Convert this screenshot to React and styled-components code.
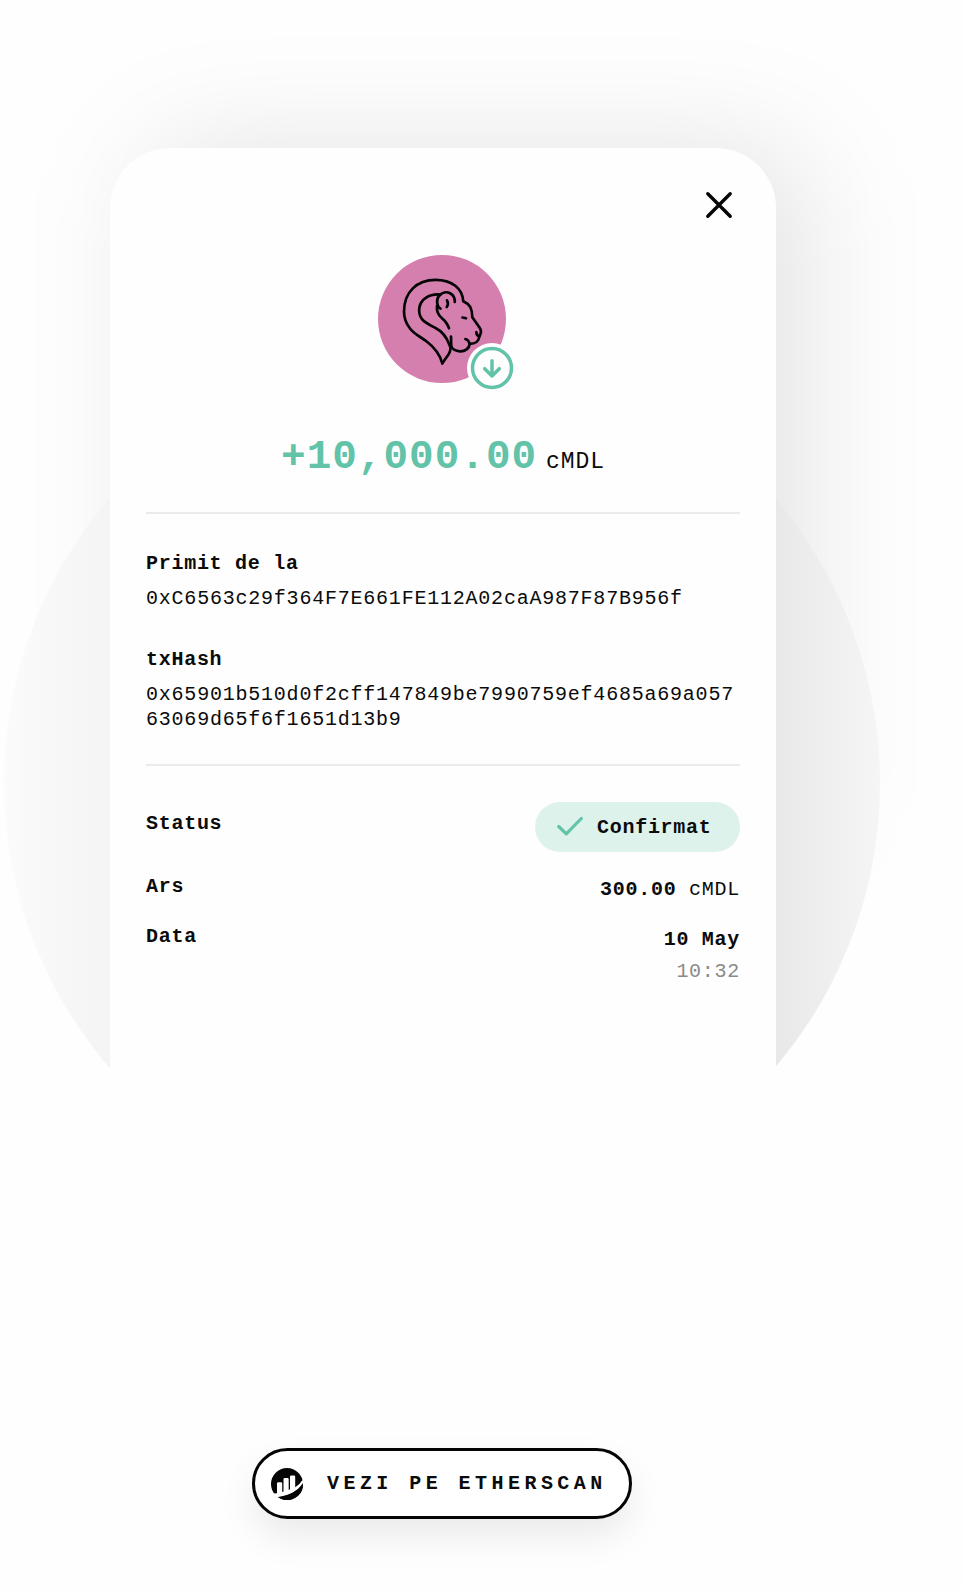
import React from 'react';
import styled, { createGlobalStyle } from 'styled-components';

const GlobalStyle = createGlobalStyle`
  * { box-sizing: border-box; }
  body {
    margin: 0;
    background: #fefefe;
    color: #0b0b0b;
    font-family: "Liberation Mono", "Courier New", monospace;
    font-size: 20px;
    letter-spacing: 0.72px;
  }
`;

const Page = styled.main`
  position: relative;
  isolation: isolate;
  overflow: hidden;
  width: 963px;
  height: 1591px;
  padding: 148px 187px 0 110px;
`;

const Disc = styled.div`
  position: absolute;
  z-index: -1;
  left: 4px;
  top: 345px;
  width: 876px;
  height: 876px;
  border-radius: 50%;
  background: linear-gradient(90deg, #fbfbfb 0%, #f4f4f4 12.1%, #e8e8e8 88.1%, #f5f5f5 100%);
`;

const Glow = styled.div`
  position: absolute;
  z-index: -2;
  left: 146px;
  top: 148px;
  width: 660px;
  height: 690px;
  border-radius: 60px;
  background: rgba(0, 0, 0, 0.105);
  filter: blur(58px);
`;

const Card = styled.section`
  display: flex;
  flex-direction: column;
  height: 1443px;
  padding: 43px 36px 72px;
  border-radius: 60px 60px 0 0;
  background: #fefefe;
`;

const CloseButton = styled.button`
  display: flex;
  align-self: flex-end;
  margin-right: 7px;
  padding: 0;
  border: 0;
  background: none;
`;

const Avatar = styled.div`
  position: relative;
  align-self: center;
  width: 128px;
  height: 128px;
  margin: 36px 2px 0 0;
`;

const Direction = styled.svg`
  position: absolute;
  left: 88px;
  top: 88px;
`;

const Amount = styled.div`
  display: flex;
  align-items: baseline;
  justify-content: center;
  height: 60px;
  margin: 44px 0 25px;
  line-height: 60px;
  gap: 9px;
`;

const Value = styled.span`
  color: #63c3a9;
  font-size: 41px;
  font-weight: 700;
  letter-spacing: 1px;
`;

const Unit = styled.span`
  font-size: 23px;
  letter-spacing: 0.9px;
`;

const Divider = styled.hr`
  width: 100%;
  height: 2px;
  margin: 0;
  border: 0;
  background: #ebebeb;
`;

const Details = styled.div`
  display: flex;
  flex-direction: column;
  gap: 36px;
  height: 250px;
  padding-top: 37px;
`;

const Label = styled.div`
  font-weight: 700;
  line-height: 25px;
`;

const Hash = styled.div`
  margin-top: 10px;
  line-height: 25px;
  letter-spacing: 0.78px;
  word-break: break-all;
`;

const Row = styled.div`
  display: flex;
  justify-content: space-between;
  margin-top: ${(p) => p.$gap}px;
`;

const RowLabel = styled(Label)`
  padding-top: ${(p) => p.$top}px;
`;

const Badge = styled.div`
  display: flex;
  align-items: center;
  gap: 13px;
  width: 205px;
  height: 50px;
  padding-left: 22px;
  border-radius: 25px;
  background: #ddf2eb;
  font-weight: 700;
`;

const RowValue = styled.div`
  padding-top: 3px;
  text-align: right;
  line-height: 25px;
`;

const Time = styled.div`
  margin-top: 7px;
  color: #8a8a8a;
`;

const ExplorerButton = styled.button`
  display: flex;
  align-items: center;
  align-self: center;
  width: 380px;
  height: 71px;
  margin: auto 2px 0 0;
  padding: 0 0 0 16px;
  border: 3px solid #050505;
  border-radius: 36px;
  background: #fff;
  box-shadow: 0 18px 36px rgba(0, 0, 0, 0.08);
  color: #0b0b0b;
  font: 700 20px "Liberation Mono", "Courier New", monospace;
  letter-spacing: 4.45px;
  white-space: nowrap;
  gap: 24px;
`;

function Lion() {
  return (
    <svg width="128" height="128" viewBox="0 0 128 128" fill="none">
      <circle cx="64" cy="64" r="64" fill="#d57fae" />
      <g stroke="#050505" strokeWidth="2.7" strokeLinecap="round" strokeLinejoin="round">
        <path d="M64.3 108.3C62 100 56 92 48.7 86.5C42 81.5 36 79 32 73.5C28 68.5 26 63 26 56.5C26 37 39 24.8 57.5 24.8C74 24.8 84.5 33.5 85.3 46.3Q90 48.5 92.3 52Q94.3 56 94.3 62.3L101.5 72.5Q103.6 75.5 102.6 78.5L101.2 82C101 86 97.5 88.8 91.6 88.8C91.3 93.5 87 96.5 82 96.3C77.5 96.3 73.5 94 73.2 90.5L73 81.5" />
        <path d="M64.3 108.3L70.5 99.5Q74 94 71.3 89.5C68.5 82 64.5 76.5 57.5 73C51 69.8 47 68 44 64.2C41.5 61 40.8 57 41.3 53C42.5 44.5 50.5 38.8 62 39.5" />
        <path d="M62.5 53.6C58.5 51.5 58 44 61.2 40.8C64 37.5 68.5 36.3 72.5 38.5C75.6 40.4 77 43.3 76.8 47" />
        <path d="M69 45.3Q71 49 68.7 52M59 51C58.4 56 60 60 64 63.3C68 66.2 69.5 69 71 73.3M84.5 62.5L88 63.3M87.4 84Q90.7 84.8 91.6 88.8M98.3 77.2Q98.5 80.6 101.2 81.5" />
      </g>
    </svg>
  );
}

function ReceivedIcon() {
  return (
    <Direction width="51" height="50" viewBox="0 0 51 50" fill="none">
      <circle cx="26" cy="25" r="25" fill="#fefefe" />
      <g stroke="#63c3a9" strokeWidth="3.5" strokeLinecap="round" strokeLinejoin="round">
        <circle cx="26" cy="25" r="19.5" />
        <path d="M26 17.8V32.5M18.7 25.7L26 33L33.3 25.7" />
      </g>
    </Direction>
  );
}

function EtherscanLogo() {
  return (
    <svg width="32" height="32" viewBox="0 0 32 32">
      <circle cx="16" cy="16" r="16" fill="#050505" />
      <path
        d="M2 25.4L6 25.2V15.4Q6 14.2 7.2 14.2H10Q11.2 14.2 11.2 15.4V24L12.5 23.6V11.3Q12.5 10.1 13.7 10.1H16.5Q17.7 10.1 17.7 11.3V21.9L19 21.3V8.8Q19 7.6 20.2 7.6H23Q24.2 7.6 24.2 8.8V19.2Q29 16.4 31.2 12.2L33 13.5L32 16Q24 26.6 7 29.2Q4 28.5 2 25.4Z"
        fill="#fff"
      />
      <path d="M6.8 29.1C17 28.4 26.5 23.6 32 15A16 16 0 0 1 6.8 29.1" fill="#050505" />
    </svg>
  );
}

export default function App() {
  return (
    <>
      <GlobalStyle />
      <Page>
        <Glow />
        <Disc />
        <Card>
          <CloseButton aria-label="Închide">
            <svg width="28" height="28" viewBox="0 0 28 28" fill="none" stroke="#050505" strokeWidth="3.4" strokeLinecap="round">
              <path d="M2.8 2.8L25.2 25.2M25.2 2.8L2.8 25.2" />
            </svg>
          </CloseButton>
          <Avatar>
            <Lion />
            <ReceivedIcon />
          </Avatar>
          <Amount>
            <Value>+10,000.00</Value>
            <Unit>cMDL</Unit>
          </Amount>
          <Divider />
          <Details>
            <div>
              <Label>Primit de la</Label>
              <Hash>0xC6563c29f364F7E661FE112A02caA987F87B956f</Hash>
            </div>
            <div>
              <Label>txHash</Label>
              <Hash>0x65901b510d0f2cff147849be7990759ef4685a69a05763069d65f6f1651d13b9</Hash>
            </div>
          </Details>
          <Divider />
          <Row $gap={36}>
            <RowLabel $top={9}>Status</RowLabel>
            <Badge>
              <svg width="27" height="22" viewBox="0 0 27 22" fill="none" stroke="#63c3a9" strokeWidth="3.2" strokeLinecap="round" strokeLinejoin="round">
                <path d="M1.7 10.5L9.3 17.8L24.3 2.5" />
              </svg>
              Confirmat
            </Badge>
          </Row>
          <Row $gap={22}>
            <RowLabel $top={0}>Ars</RowLabel>
            <RowValue><b>300.00</b> cMDL</RowValue>
          </Row>
          <Row $gap={22}>
            <RowLabel $top={0}>Data</RowLabel>
            <RowValue><b>10 May</b><Time>10:32</Time></RowValue>
          </Row>
          <ExplorerButton>
            <EtherscanLogo />
            VEZI PE ETHERSCAN
          </ExplorerButton>
        </Card>
      </Page>
    </>
  );
}
